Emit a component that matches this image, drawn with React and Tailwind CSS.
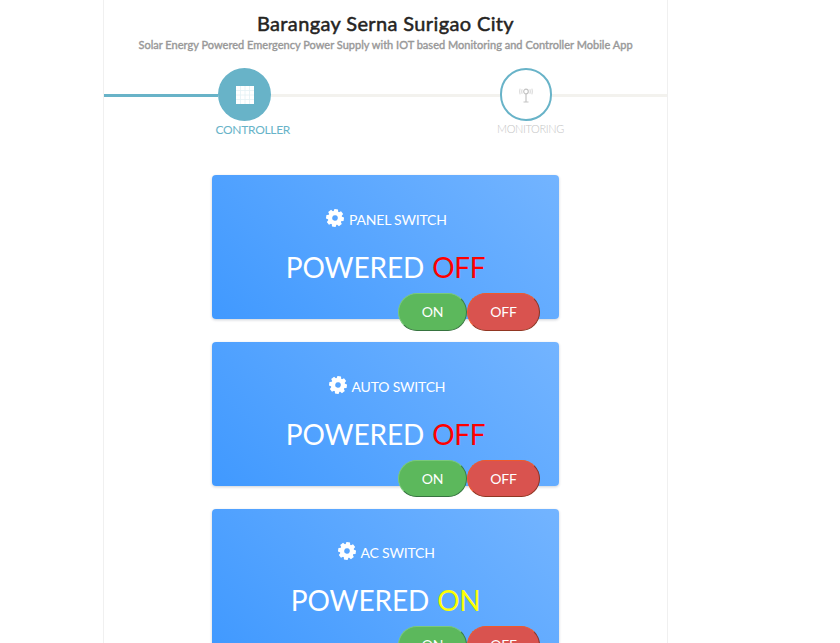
const switches = [
  { name: 'PANEL SWITCH', state: 'OFF', labelWidth: 'w-[98px]' },
  { name: 'AUTO SWITCH', state: 'OFF', labelWidth: 'w-[93px]' },
  { name: 'AC SWITCH', state: 'ON', labelWidth: 'w-[75px]' },
];

function Gear() {
  return (
    <svg viewBox="0 0 18 18" className="h-[18px] w-[18px] shrink-0" fill="#fff">
      <g transform="rotate(8 9 9)">
        {[0, 45, 90, 135, 180, 225, 270, 315].map((a) => (
          <path key={a} transform={`rotate(${a} 9 9)`} d="M6.5 3.4 7.2.1h3.6l.7 3.3z" />
        ))}
        <circle cx="9" cy="9" r="4.9" fill="none" stroke="#fff" strokeWidth="4.2" />
      </g>
    </svg>
  );
}

function PanelIcon() {
  return (
    <svg viewBox="0 0 18 18" className="h-[18px] w-[18px]">
      <path fill="#fff" d="M0 0h18v18H0z" />
      <path d="M4.5 0v18M9 0v18M13.5 0v18M0 4.5h18M0 9h18M0 13.5h18" stroke="#e3f1f5" strokeWidth=".8" />
    </svg>
  );
}

function AntennaIcon() {
  return (
    <svg viewBox="0 0 14 15" className="h-[15px] w-[14px]" fill="none" stroke="#c4c4c4" strokeWidth="1.2">
      <circle cx="7" cy="3.5" r="2.3" />
      <path d="M7 6v8M4.5 14h5" />
      <path d="M3.2 1.3q-1 2.2 0 4.4M10.8 1.3q1 2.2 0 4.4M1.2 .6q-1.1 2.9 0 5.8M12.8 .6q1.1 2.9 0 5.8" stroke="#dcdcdc" />
    </svg>
  );
}

function SwitchCard({ name, state, labelWidth }) {
  const on = state === 'ON';
  return (
    <section className="h-36 w-[347px] shrink-0 rounded-[4px] bg-[linear-gradient(45deg,#4099ff,#73b4ff)] pt-[34.8px] text-white shadow-[0_1px_3px_rgba(4,26,55,0.2)]">
      <div className="flex h-5 items-center justify-center gap-[5px] pl-[2px] text-[14px] leading-5">
        <div className="-mt-[4px]"><Gear /></div>
        <span className={`${labelWidth} whitespace-nowrap tracking-[-0.2px]`}>{name}</span>
      </div>
      <div className="mt-5 h-[34px] whitespace-nowrap text-center text-[28px] leading-[34px] tracking-[-0.1px]">
        POWERED <span className={on ? 'pl-px tracking-[-0.4px] text-[#ffff00]' : 'pl-px tracking-[-0.4px] text-[#ff0000]'}>{state}</span>
      </div>
      <div className="mt-[9px] flex justify-end pr-[19px] text-[14px] leading-5 tracking-[-0.2px]">
        <button className="h-[37.6px] w-[69px] rounded-[20px] border border-t-[#7bc97b] border-r-[#397a43] border-b-[#36733f] border-l-[#7bc97b] bg-[#5cb85c]">ON</button>
        <button className="h-[37.6px] w-[73px] rounded-[20px] border border-t-[#ee5a2c] border-r-[#873323] border-b-[#913622] border-l-[#ee5a2c] bg-[#d9534f]">OFF</button>
      </div>
    </section>
  );
}

export default function App() {
  return (
    <div className="h-[643px] w-full overflow-hidden bg-white font-['Lato',sans-serif]">
      <main className="ml-[103px] flex h-full w-[565px] flex-col items-center border-x border-[#f0f0f0] pt-[11px]">
        <h1 className="h-[25px] shrink-0 whitespace-nowrap text-[20px] leading-[25px] tracking-[0.37px] text-[#252422] [-webkit-text-stroke:0.5px_#252422]">Barangay Serna Surigao City</h1>
        <p className="mt-px h-4 shrink-0 whitespace-nowrap text-[11px] leading-4 tracking-[0.02px] text-[#999] [-webkit-text-stroke:0.4px_#999]">
          Solar Energy Powered Emergency Power Supply with IOT based Monitoring and Controller Mobile App
        </p>
        <nav className="mt-[15px] w-full shrink-0">
          <div className="flex items-center">
            <div className="mt-[2px] h-[3px] w-[114px] bg-[#68b3c8]" />
            <div className="flex h-[53px] w-[53px] items-center justify-center rounded-full bg-[#68b3c8] pl-px"><PanelIcon /></div>
            <div className="mt-[2px] h-[3px] w-[229px] bg-[#f3f2ee]" />
            <div className="flex h-[53px] w-[52px] items-center justify-center rounded-full border-2 border-[#68b3c8] pt-px"><AntennaIcon /></div>
            <div className="mt-[2px] h-[3px] flex-1 bg-[#f3f2ee]" />
          </div>
          <div className="flex h-[18px] text-[12px] leading-4">
            <span className="ml-[111.5px] mt-px w-[281.5px] tracking-[-0.3px] text-[#68b3c8]">CONTROLLER</span>
            <span className="whitespace-nowrap text-[11px] font-light tracking-[-0.35px] text-[#c4c4c4]">MONITORING</span>
          </div>
        </nav>
        <div className="mt-[36.3px] flex shrink-0 flex-col gap-[22.65px]">
          {switches.map((s) => <SwitchCard key={s.name} {...s} />)}
        </div>
      </main>
    </div>
  );
}
